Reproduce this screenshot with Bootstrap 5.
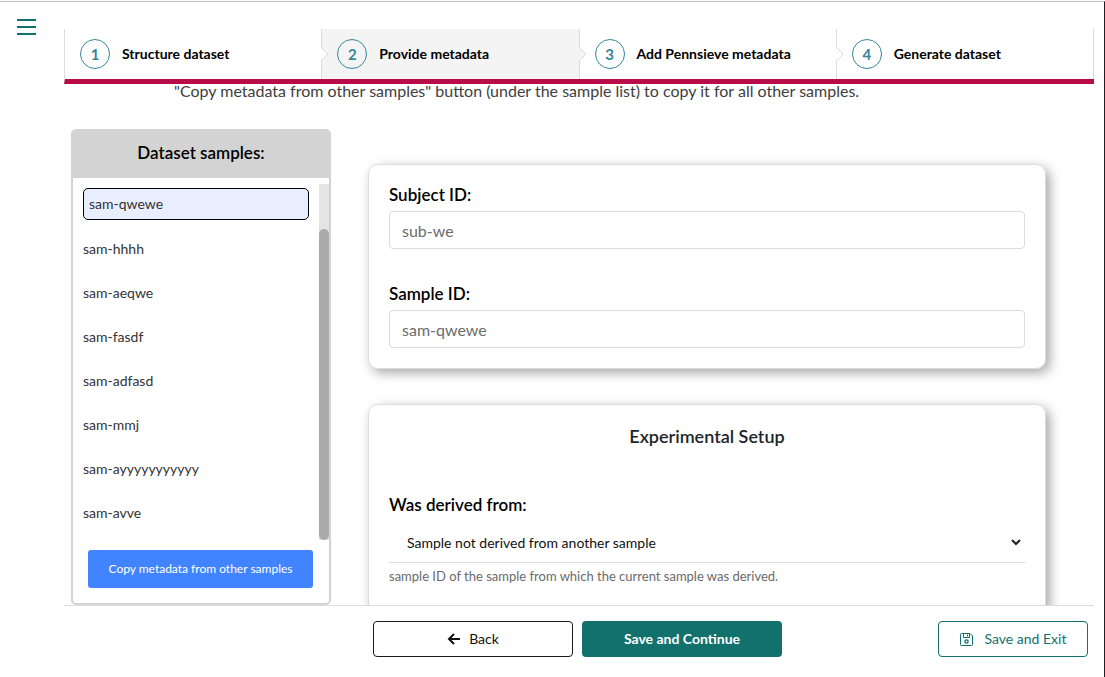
<!DOCTYPE html>
<html lang="en">
<head>
<meta charset="utf-8">
<meta name="viewport" content="width=device-width, initial-scale=1">
<title>Provide metadata</title>
<link href="https://cdn.jsdelivr.net/npm/bootstrap@5.3.0/dist/css/bootstrap.min.css" rel="stylesheet">
<style>
  :root { --teal: #13716d; --crimson: #b80d49; --line: #dcdcdd; }
  body { font-family: Lato, "Liberation Sans", sans-serif; font-size: 16px; color: #212529; background: #fff; }
  .app-shell { height: 100vh; padding-top: 1px; }
  .app-frame { border-top: 1px solid #bbbfbe; border-right: 1px solid #1d1f24; }
  .side-rail { width: 64px; padding: 17px 0 0 17px; }
  .menu-toggle { width: 19px; height: 16px; color: var(--teal); }
  .main-pane { padding-top: 27px; margin-right: 10px; }

  .step-bar { border-bottom: 5px solid var(--crimson); border-left: 1px solid var(--line); }
  .step-link { height: 50px; padding-left: 15px; gap: 12px; font-size: 14px; line-height: 18px; font-weight: 700; color: #000; border-right: 1px solid var(--line); }
  .step-link.current { background: #f4f4f4; }
  .step-num { width: 30px; height: 30px; border: 1px solid #35869a; color: #35869a; font-size: 15px; }
  .step-arrow { right: -7px; top: 18px; width: 8px; height: 14px; z-index: 1; }

  .content-pane { margin-top: -5px; }
  .intro-text { padding-left: 110px; line-height: 24px; color: #404040; margin-bottom: 26px; }
  .work-row { padding-left: 7px; padding-right: 48px; gap: 37px; }

  .sample-panel { width: 260px; border: 2px solid lightgray; border-radius: 5px; overflow: hidden; }
  .sample-title { background: lightgray; font-size: 17px; font-weight: 600; line-height: 24px; padding: 10px 0 13px; color: #000; }
  .sample-list { height: 356px; margin-top: 6px; }
  .sample-items { padding: 4px 10px; }
  .sample-item { height: 44px; border: 0; background: none; text-align: left; padding: 0; font-size: 14px; line-height: 20px; color: #333; }
  .sample-item.chosen { height: 32px; border: 1px solid #000; border-radius: 5px; background: #e8eefe; padding: 0 5px; margin-bottom: 7px; }
  .scroll-track { width: 10px; background: #e4e4e4; padding-top: 45px; }
  .scroll-thumb { background: #aaa; border-radius: 5px; }
  .copy-btn { height: 38px; margin: 10px 16px 15px 15px; background: #4284ff; color: #fff; font-size: 12px; border: 0; border-radius: 3px; padding: 0; }
  .copy-btn:hover { background: #2f73f0; color: #fff; }

  .form-column { padding-top: 35px; gap: 35px; }
  .form-box { border: 1px solid var(--line); border-radius: 10px; padding: 20px; box-shadow: 4px 4px 12px 0 rgba(0,0,0,.35); }
  .field-group + .field-group { margin-top: 35px; }
  .field-label { font-size: 17px; font-weight: 600; line-height: 20px; color: #000; margin-bottom: 6px; }
  .field-input { height: 38px; border: 1px solid var(--line); border-radius: 4px; padding: 0 12px; font-size: 16px; }
  .field-input::placeholder { color: #6c6c6c; }
  .section-title { font-size: 18px; font-weight: 600; line-height: 22px; margin-bottom: 48px; }
  .derived-select { height: 48px; border: 0; border-bottom: 1px solid var(--line); border-radius: 0; padding: 8px 28px 0 18px; font-size: 14px; color: #111; background-image: none; }
  .select-caret { right: 3px; top: 22px; width: 12px; height: 10px; pointer-events: none; }
  .help-text { font-size: 13px; line-height: 16px; color: #6a6a6a; padding: 5px 0 60px; }

  .action-bar { display: grid; grid-template-columns: 1fr auto 1fr; border-top: 1px solid var(--line); padding: 15px 6px 20px 3px; }
  .action-main { grid-column: 2; gap: 9px; }
  .action-btn { width: 200px; height: 36px; font-size: 14px; line-height: 20px; border-radius: 4px; padding: 0; }
  .back-btn { border: 1px solid #1b1b1f; color: #111; background: #fff; }
  .next-btn, .next-btn:hover { background: var(--teal); color: #fff; font-weight: 700; }
  .exit-btn { width: 150px; border: 1px solid var(--teal); color: var(--teal); background: #fff; }
</style>
</head>
<body>
<div class="app-shell overflow-hidden">
<div class="app-frame d-flex h-100">
  <aside class="side-rail flex-shrink-0">
    <button type="button" class="menu-toggle btn p-0 border-0 d-block lh-1" aria-label="Toggle menu">
      <svg class="d-block" width="19" height="16" viewBox="0 0 19 16" shape-rendering="crispEdges"><path d="M0 0h19v2H0zM0 7h19v2H0zM0 14h19v2H0z" fill="currentColor"/></svg>
    </button>
  </aside>

  <div class="main-pane d-flex flex-column flex-grow-1 overflow-hidden">
    <nav class="step-bar row g-0 flex-shrink-0 position-relative z-1" aria-label="Progress">
      <div class="col position-relative">
        <a href="#structure" class="step-link d-flex align-items-center text-decoration-none"><span class="step-num rounded-circle d-flex align-items-center justify-content-center">1</span>Structure dataset</a>
        <svg class="step-arrow position-absolute" viewBox="0 0 8 14"><path d="M0 0 7 7 0 14z" fill="#fff"/><path d="M0 0 7 7 0 14" fill="none" stroke="#dcdcdd"/></svg>
      </div>
      <div class="col position-relative">
        <a href="#metadata" class="step-link current d-flex align-items-center text-decoration-none" aria-current="step"><span class="step-num rounded-circle d-flex align-items-center justify-content-center">2</span>Provide metadata</a>
        <svg class="step-arrow position-absolute" viewBox="0 0 8 14"><path d="M0 0 7 7 0 14z" fill="#f4f4f4"/><path d="M0 0 7 7 0 14" fill="none" stroke="#dcdcdd"/></svg>
      </div>
      <div class="col position-relative">
        <a href="#pennsieve" class="step-link d-flex align-items-center text-decoration-none"><span class="step-num rounded-circle d-flex align-items-center justify-content-center">3</span>Add Pennsieve metadata</a>
        <svg class="step-arrow position-absolute" viewBox="0 0 8 14"><path d="M0 0 7 7 0 14z" fill="#fff"/><path d="M0 0 7 7 0 14" fill="none" stroke="#dcdcdd"/></svg>
      </div>
      <div class="col">
        <a href="#generate" class="step-link d-flex align-items-center text-decoration-none"><span class="step-num rounded-circle d-flex align-items-center justify-content-center">4</span>Generate dataset</a>
      </div>
    </nav>

    <main class="content-pane flex-grow-1 overflow-hidden">
      <p class="intro-text">"Copy metadata from other samples" button (under the sample list) to copy it for all other samples.</p>
      <div class="work-row d-flex align-items-start">
        <section class="sample-panel d-flex flex-column flex-shrink-0">
          <h2 class="sample-title text-center m-0">Dataset samples:</h2>
          <div class="sample-list d-flex">
            <div class="sample-items d-flex flex-column flex-grow-1">
              <button type="button" class="sample-item chosen">sam-qwewe</button>
              <button type="button" class="sample-item">sam-hhhh</button>
              <button type="button" class="sample-item">sam-aeqwe</button>
              <button type="button" class="sample-item">sam-fasdf</button>
              <button type="button" class="sample-item">sam-adfasd</button>
              <button type="button" class="sample-item">sam-mmj</button>
              <button type="button" class="sample-item">sam-ayyyyyyyyyyy</button>
              <button type="button" class="sample-item">sam-avve</button>
            </div>
            <div class="scroll-track d-flex flex-column"><div class="scroll-thumb flex-grow-1"></div></div>
          </div>
          <button type="button" class="copy-btn btn">Copy metadata from other samples</button>
        </section>

        <form class="form-column d-flex flex-column flex-grow-1">
          <section class="form-box">
            <div class="field-group">
              <label class="field-label d-block" for="subject-id">Subject ID:</label>
              <input class="field-input form-control" id="subject-id" type="text" placeholder="sub-we">
            </div>
            <div class="field-group">
              <label class="field-label d-block" for="sample-id">Sample ID:</label>
              <input class="field-input form-control" id="sample-id" type="text" placeholder="sam-qwewe">
            </div>
          </section>
          <section class="form-box">
            <h2 class="section-title text-center">Experimental Setup</h2>
            <label class="field-label d-block mb-0" for="derived-from">Was derived from:</label>
            <div class="position-relative">
              <select class="derived-select form-select" id="derived-from"><option>Sample not derived from another sample</option></select>
              <svg class="select-caret position-absolute" viewBox="0 0 12 10"><path d="m2 3 4 4 4-4" fill="none" stroke="#222" stroke-width="2"/></svg>
            </div>
            <p class="help-text m-0">sample ID of the sample from which the current sample was derived.</p>
          </section>
        </form>
      </div>
    </main>

    <footer class="action-bar flex-shrink-0">
      <div class="action-main d-flex">
        <button type="button" class="action-btn back-btn btn d-flex align-items-center justify-content-center gap-2">
          <svg width="14" height="12" viewBox="0 0 14 12"><path d="M7 1 2 6l5 5M2 6h11" fill="none" stroke="currentColor" stroke-width="2"/></svg>Back
        </button>
        <button type="button" class="action-btn next-btn btn">Save and Continue</button>
      </div>
      <button type="button" class="action-btn exit-btn btn d-flex align-items-center justify-content-center gap-2 ms-auto">
        <svg class="me-1" width="13" height="13" viewBox="0 0 13 13" fill="none" stroke="currentColor" stroke-width="1"><path d="M2 .5h8L12.500 3v8.500a1 1 0 0 1-1 1h-10a1 1 0 0 1-1-1v-10a1 1 0 0 1 1-1zM3.500.5v4h6v-4M7.500 1.500v2"/><circle cx="6.500" cy="8.500" r="1.600" stroke-width="1.400"/></svg>Save and Exit
      </button>
    </footer>
  </div>
</div>
</div>
<script src="https://cdn.jsdelivr.net/npm/bootstrap@5.3.0/dist/js/bootstrap.bundle.min.js"></script>
</body>
</html>
